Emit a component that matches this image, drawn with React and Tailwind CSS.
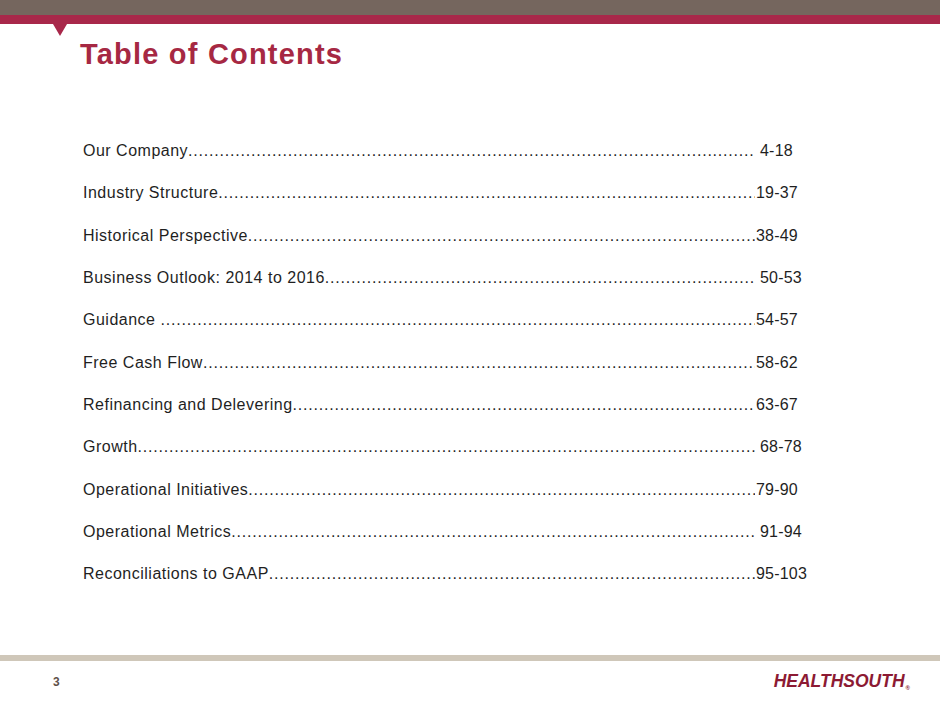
import React from "react";

const entries = [
  { title: "Our Company", pages: "4-18", gap: true },
  { title: "Industry Structure", pages: "19-37" },
  { title: "Historical Perspective", pages: "38-49" },
  { title: "Business Outlook: 2014 to 2016", pages: "50-53", gap: true },
  { title: "Guidance ", pages: "54-57" },
  { title: "Free Cash Flow", pages: "58-62" },
  { title: "Refinancing and Delevering", pages: "63-67" },
  { title: "Growth", pages: "68-78", gap: true },
  { title: "Operational Initiatives", pages: "79-90" },
  { title: "Operational Metrics", pages: "91-94", gap: true },
  { title: "Reconciliations to GAAP", pages: "95-103" },
];

const DOTS = ".".repeat(200);

const TocRow = ({ title, pages, gap }) => (
  <div className="flex items-center h-[42.3px] w-[730px] whitespace-nowrap">
    <span className="shrink-0 whitespace-pre">{title}</span>
    <span className="flex-1 overflow-hidden tracking-[0.8px]">{DOTS}</span>
    <span className={`w-[58px] shrink-0 tracking-[0.2px] ${gap ? "pl-[5px]" : "pl-[1px]"}`}>{pages}</span>
  </div>
);

export default function App() {
  return (
    <div className="relative w-[940px] h-[705px] bg-white flex flex-col overflow-hidden">
      {/* header bars */}
      <div className="h-[15px] bg-[#75665e]" />
      <div className="h-[9px] bg-[#a8284a]" />
      <div className="absolute left-[53px] top-[24px] w-0 h-0 border-l-[7px] border-r-[7px] border-t-[12px] border-l-transparent border-r-transparent border-t-[#a8284a]" />

      <h1
        className="mt-[16px] ml-[80px] text-[29px] leading-none font-bold text-[#a62843] tracking-[1.2px]"
        style={{ fontFamily: '"Liberation Sans", Arial, sans-serif' }}
      >
        Table of Contents
      </h1>

      {/* contents */}
      <div
        className="mt-[61px] ml-[83px] text-[16px] text-[#1f1f1f] tracking-[0.5px]"
        style={{ fontFamily: '"Liberation Sans", Arial, sans-serif' }}
      >
        {entries.map((e) => (
          <TocRow key={e.title} {...e} />
        ))}
      </div>

      <div className="flex-1" />

      {/* footer */}
      <div className="h-[6px] bg-[#cfc7b9]" />
      <div
        className="h-[44px] flex items-center justify-between pl-[53px] pr-[30px]"
        style={{ fontFamily: '"Liberation Sans", Arial, sans-serif' }}
      >
        <span className="text-[12px] font-bold text-[#5e5048] -mt-[2px]">3</span>
        <span className="flex items-end text-[#8c1a33] font-bold italic -mt-[2px]">
          <span className="text-[17.5px] leading-none tracking-[0px]">HEALTHSOUTH</span>
          <span className="text-[6px] leading-none ml-[1px] not-italic">®</span>
        </span>
      </div>
    </div>
  );
}
